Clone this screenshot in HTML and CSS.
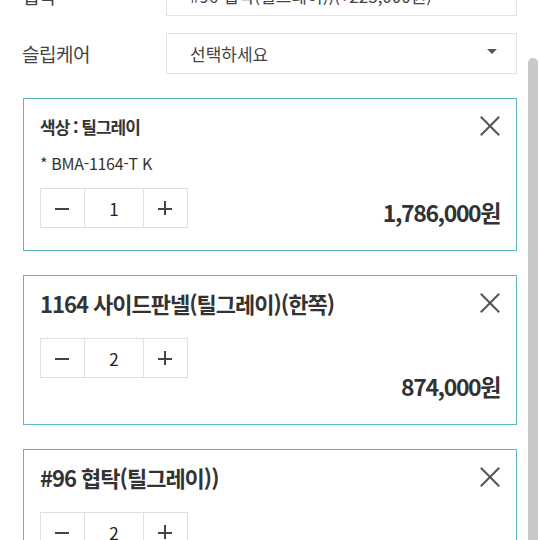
FILE: index.html
```html
<!DOCTYPE html>
<html lang="ko">
<head>
  <meta charset="UTF-8" />
  <meta name="viewport" content="width=device-width, initial-scale=1.0" />
  <title>옵션 선택</title>
  <link rel="stylesheet" href="styles.css">
</head>
<body>
  <div class="panel">
    <div class="option-row top-row">
      <span class="label">협탁</span>
      <div class="select"><span>#96 협탁(틸그레이))(+223,000원)</span></div>
    </div>
    <div class="option-row">
      <span class="label">슬립케어</span>
      <div class="select"><span>선택하세요</span><i class="caret"></i></div>
    </div>

    <div class="item">
      <div class="item-head">
        <span class="item-title small">색상 : 틸그레이</span>
        <span class="close"></span>
      </div>
      <div class="item-sub">* BMA-1164-T K</div>
      <div class="item-foot">
        <div class="stepper">
          <button class="minus" aria-label="빼기"></button><span class="qty">1</span><button class="plus" aria-label="더하기"></button>
        </div>
        <span class="price">1,786,000원</span>
      </div>
    </div>

    <div class="item">
      <div class="item-head">
        <span class="item-title">1164 사이드판넬(틸그레이)(한쪽)</span>
        <span class="close"></span>
      </div>
      <div class="stepper">
        <button class="minus" aria-label="빼기"></button><span class="qty">2</span><button class="plus" aria-label="더하기"></button>
      </div>
      <div class="price-row"><span class="price">874,000원</span></div>
    </div>

    <div class="item">
      <div class="item-head">
        <span class="item-title">#96 협탁(틸그레이))</span>
        <span class="close"></span>
      </div>
      <div class="stepper">
        <button class="minus" aria-label="빼기"></button><span class="qty">2</span><button class="plus" aria-label="더하기"></button>
      </div>
      <div class="price-row"><span class="price">446,000원</span></div>
    </div>
  </div>
  <div class="scrollbar"></div>
</body>
</html>
```

FILE: styles.css
```css
html, body {
  margin: 0;
  height: 540px;
  overflow: hidden;
}
body {
  font-family: "Noto Sans CJK KR", "Noto Sans", sans-serif;
  color: #333;
  background: #fff;
  position: relative;
}
.panel {
  padding: 0 23px 0 22px;
}
.option-row {
  display: flex;
  align-items: center;
  height: 41px;
  margin-bottom: 17px;
}
.top-row {
  margin-top: -25px;
}
.label {
  width: 144px;
  font-size: 19px;
  color: #444;
  letter-spacing: -0.5px;
}
.select {
  flex: 1;
  height: 39px;
  border: 1px solid #e2e2e2;
  display: flex;
  align-items: center;
  justify-content: space-between;
  padding: 0 19px 0 23px;
  font-size: 17px;
  color: #444;
}
.caret {
  width: 0;
  height: 0;
  border-left: 5px solid transparent;
  border-right: 5px solid transparent;
  border-top: 5px solid #555;
  margin-top: -4px;
}
.item {
  border: 1.5px solid #5cb8c4;
  padding: 13px 16px 21px 16px;
  margin: 24px 0 24px 1px;
}
.item + .item {
  margin-top: 0;
}
.item-head {
  display: flex;
  justify-content: space-between;
  align-items: center;
  height: 28px;
}
.item-title {
  font-size: 22px;
  font-weight: bold;
  letter-spacing: -1px;
}
.item-title.small {
  font-size: 17px;
}
.close {
  width: 20px;
  height: 20px;
  position: relative;
}
.close::before, .close::after {
  content: "";
  position: absolute;
  left: -3px;
  top: 9px;
  width: 26px;
  height: 2px;
  background: #555;
  transform: rotate(45deg);
}
.close::after {
  transform: rotate(-45deg);
}
.item-sub {
  font-size: 16px;
  letter-spacing: -0.3px;
  margin-top: 11px;
  height: 24px;
}
.item-foot {
  display: flex;
  justify-content: space-between;
  align-items: center;
  margin-top: 12px;
}
.item-head + .stepper {
  margin-top: 21px;
}
.stepper {
  display: flex;
  width: 148px;
  height: 40px;
  border: 1px solid #e0e0e0;
  box-sizing: border-box;
}
.stepper button {
  width: 43px;
  border: none;
  background: #fff;
  padding: 0;
  position: relative;
}
.stepper button::before, .plus::after {
  content: "";
  position: absolute;
  left: 14px;
  top: 19px;
  width: 14px;
  height: 1.5px;
  background: #444;
}
.plus::after {
  left: 20.25px;
  top: 12.25px;
  width: 1.5px;
  height: 14px;
}
.stepper .qty {
  flex: 1;
  border-left: 1px solid #e0e0e0;
  border-right: 1px solid #e0e0e0;
  display: flex;
  align-items: center;
  justify-content: center;
  font-size: 17px;
  color: #222;
}
.price {
  font-size: 23px;
  font-weight: bold;
  letter-spacing: -1.4px;
  color: #333;
  margin-top: 8px;
}
.price-row {
  display: flex;
  justify-content: flex-end;
  margin-top: -9px;
}
.price-row .price {
  margin-top: 0;
}
.scrollbar {
  position: absolute;
  right: 2px;
  top: 58px;
  width: 10px;
  height: 500px;
  background: #c8c8c8;
  border-radius: 5px 5px 0 0;
}
```
